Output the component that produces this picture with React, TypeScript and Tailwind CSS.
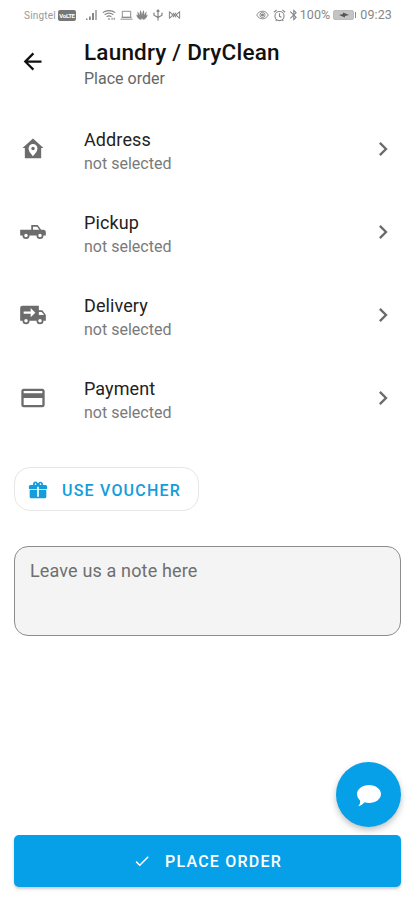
import React from 'react';

type IconProps = {
  path: string;
  className?: string;
};

const Icon: React.FC<IconProps> = ({ path, className }) => (
  <svg viewBox="0 0 24 24" fill="currentColor" fillRule="evenodd" className={className}>
    <path d={path} />
  </svg>
);

const icons = {
  back: 'M20,11V13H8L13.5,18.5L12.08,19.92L4.16,12L12.08,4.08L13.5,5.5L8,11H20Z',
  chevron: 'M8.59,16.58L13.17,12L8.59,7.41L10,6L16,12L10,18L8.59,16.58Z',
  home: 'M12,3L3,11.2H5V20H19V11.2H21L12,3M12,7.7C14.1,7.7 15.8,9.4 15.8,11.5C15.8,14.5 12,18 12,18C12,18 8.2,14.5 8.2,11.5C8.2,9.4 9.9,7.7 12,7.7M12,10A1.5,1.5 0 0,0 10.5,11.5A1.5,1.5 0 0,0 12,13A1.5,1.5 0 0,0 13.5,11.5A1.5,1.5 0 0,0 12,10Z',
  pickup: 'M16,6H10.5V10H1V15H3A3,3 0 0,0 6,18A3,3 0 0,0 9,15H15A3,3 0 0,0 18,18A3,3 0 0,0 21,15H23V12C23,10.89 22.11,10 21,10H19L16,6M12,7.5H15.5L17.46,10H12V7.5M6,13.5A1.5,1.5 0 0,1 7.5,15A1.5,1.5 0 0,1 6,16.5A1.5,1.5 0 0,1 4.5,15A1.5,1.5 0 0,1 6,13.5M18,13.5A1.5,1.5 0 0,1 19.5,15A1.5,1.5 0 0,1 18,16.5A1.5,1.5 0 0,1 16.5,15A1.5,1.5 0 0,1 18,13.5Z',
  truck: 'M3,4A2,2 0 0,0 1,6V17H3A3,3 0 0,0 6,20A3,3 0 0,0 9,17H15A3,3 0 0,0 18,20A3,3 0 0,0 21,17H23V12L20,8H17V4H3M10,6L14,10L10,14V11H4V9H10V6M17,9.5H19.5L21.47,12H17V9.5M6,15.5A1.5,1.5 0 0,1 7.5,17A1.5,1.5 0 0,1 6,18.5A1.5,1.5 0 0,1 4.5,17A1.5,1.5 0 0,1 6,15.5M18,15.5A1.5,1.5 0 0,1 19.5,17A1.5,1.5 0 0,1 18,18.5A1.5,1.5 0 0,1 16.5,17A1.5,1.5 0 0,1 18,15.5Z',
  card: 'M20,8H4V6H20V8M20,18H4V12H20V18M20,4H4C2.89,4 2,4.89 2,6V18A2,2 0 0,0 4,20H20A2,2 0 0,0 22,18V6C22,4.89 21.1,4 20,4Z',
  gift: 'M9.06,1.93C7.17,1.92 5.33,3.74 6.17,6H3A2,2 0 0,0 1,8V10A1,1 0 0,0 2,11H11V8H13V11H22A1,1 0 0,0 23,10V8A2,2 0 0,0 21,6H17.83C19,2.73 14.6,0.42 12.57,3.24L12,4L11.43,3.22C10.8,2.33 9.93,1.94 9.06,1.93M9,4C9.89,4 10.34,5.08 9.71,5.71C9.08,6.34 8,5.89 8,5A1,1 0 0,1 9,4M15,4C15.89,4 16.34,5.08 15.71,5.71C15.08,6.34 14,5.89 14,5A1,1 0 0,1 15,4M2,12V20A2,2 0 0,0 4,22H20A2,2 0 0,0 22,20V12H13V20H11V12H2Z',
  check: 'M21,7L9,19L3.5,13.5L4.91,12.09L9,16.17L19.59,5.59L21,7Z',
  chat: 'M12,2C18.6,2 24,6 24,11C24,16 18.6,20 12,20C10.4,20 8.9,19.8 7.5,19.3C5.6,21.600 3.400,23 1.200,23.200C2.800,21.600 3.400,19.600 3.100,17.500C1.200,15.800 0,13.500 0,11C0,6 5.400,2 12,2Z',
  bluetooth: 'M14.88,16.29L13,18.17V14.41M13,5.83L14.88,7.71L13,9.58M17.71,7.71L12,2H11V9.58L6.41,5L5,6.41L10.59,12L5,17.58L6.41,19L11,14.41V22H12L17.71,16.29L13.41,12L17.71,7.71Z',
};

const rows = [
  { label: 'Address', icon: icons.home },
  { label: 'Pickup', icon: icons.pickup },
  { label: 'Delivery', icon: icons.truck },
  { label: 'Payment', icon: icons.card },
];

const StatusBar: React.FC = () => (
  <div className="flex h-[30px] items-center justify-between pr-[23px] pl-6 text-[#868686]">
    <div className="flex items-center">
      <span className="w-[33px] text-[10px] tracking-[0.2px] text-[#999]">Singtel</span>
      <span className="mr-2.5 ml-px flex h-[11px] w-[18px] items-center justify-center rounded-xs bg-[#777] text-[6px] font-bold tracking-tighter text-white">VoLTE</span>
      <svg viewBox="0 0 12 12" className="mr-1 size-3" fill="currentColor">
        <path d="M0 11V9.5h1.5V11zM3 11V7.5h1.8V11zM6 11V4h2v7z" />
        <path d="M9 11V1h2v10z" opacity=".65" />
      </svg>
      <svg viewBox="0 0 16 12" className="mr-1 h-3 w-[14px]" fill="none" stroke="currentColor" strokeWidth="1.3">
        <path d="M.8 3.3C5 .2 11 .2 15.2 3.3M3 5.7c3-2.2 7-2.2 10 0M5.3 8c1.7-1.2 3.7-1.2 5.4 0M7 10.2l1 .8 1-.8M11.5 9v2.5M14 9v2.5" />
      </svg>
      <svg viewBox="0 0 14 12" className="mr-[3px] h-3 w-[13px]" fill="none" stroke="currentColor">
        <path d="M2.5 2h9v6.5h-9zM.5 10.5h13M1.5 8.5h11" />
      </svg>
      <svg viewBox="0 0 12 12" className="mr-1 size-3" fill="currentColor">
        <path d="M5.8 10.8C4 8 3.2 4 4.2 1c1.700 2 2.200 6 1.600 9.800M6.200 10.800C8 8 8.800 4 7.800 1c-1.700 2-2.200 6-1.600 9.800M5.300 10.800C2.600 9 1.200 5.800 1.500 2.500 3.500 4.500 5 7.500 5.300 10.800M6.700 10.800c2.700-1.800 4.100-5 3.800-8.300-2 2-3.500 5-3.800 8.300M4.800 10.900C2.500 10.200.8 8.500.2 5.500c2 .8 3.800 2.600 4.600 5.400M7.200 10.900c2.300-.7 4-2.400 4.600-5.400-2 .8-3.800 2.600-4.600 5.400" />
      </svg>
      <svg viewBox="0 0 12 12" className="mr-1 size-3" fill="none" stroke="currentColor" strokeWidth="1.2">
        <path d="M6 11.500V1M4.600 2.700 6 1l1.400 1.700M2 4v2.200L6 8.500l4-2.300V4M1.300 4.300h1.400M9.300 4.300h1.400" />
      </svg>
      <svg viewBox="0 0 14 12" className="h-3 w-[13px]" fill="none" stroke="currentColor" strokeWidth="1.1">
        <path d="M1.5 2v8M12.5 2v8M2 3l3.5 3L2 9M12 3 8.500 6 12 9M5.500 3.500 8.500 8.500M8.500 3.500 5.500 8.500" />
      </svg>
    </div>
    <div className="flex items-center">
      <svg viewBox="0 0 14 12" className="mr-1 h-3 w-[13px]" fill="none" stroke="currentColor">
        <path d="M.8 6C3.5.5 10.5.5 13.2 6 10.5 11.5 3.5 11.500.8 6Z" />
        <circle cx="7" cy="6" r="2.8" />
        <circle cx="7" cy="6" r="1.2" fill="currentColor" />
      </svg>
      <svg viewBox="0 0 12 12" className="mr-[3px] h-[13px] w-[13px]" fill="none" stroke="currentColor">
        <circle cx="6" cy="6.5" r="4.2" />
        <path d="M6 4v2.800l1.800.8M.8 3 3.300.9M11.200 3 8.700.9M2.500 11l1-1M9.500 11l-1-1" />
      </svg>
      <svg viewBox="4 1 15 22" fill="currentColor" fillRule="evenodd" className="mr-[2px] h-3 w-[9px]">
        <path d={icons.bluetooth} />
      </svg>
      <span className="text-[12.5px] tracking-[0.1px]">100%</span>
      <span className="ml-[3px] flex h-2.5 w-[21px] items-center justify-center rounded-xs border border-[#bbb] bg-[#c4c4c4]">
        <svg viewBox="0 0 10 6" className="h-1.5 w-2.5" fill="#555">
          <path d="M0 3 4 2V.5L10 3 6 4v1.5z" />
        </svg>
      </span>
      <span className="mr-1 ml-px h-1.5 w-px bg-[#888]" />
      <span className="text-[12.5px] tracking-[0.1px]">09:23</span>
    </div>
  </div>
);

const App: React.FC = () => {
  return (
    <div className="flex h-[900px] w-[415px] flex-col bg-white font-['Roboto',sans-serif]">
      <StatusBar />

      <header className="flex h-[77px] items-start pl-[19px]">
        <Icon path={icons.back} className="mt-[18px] size-[27px] text-[#111]" />
        <div className="ml-[38px] pt-2">
          <h1 className="text-[22.5px] leading-7 font-medium tracking-[0.2px] text-[#111]">Laundry / DryClean</h1>
          <p className="pt-px text-base leading-6 text-[#666]">Place order</p>
        </div>
      </header>

      <ul>
        {rows.map((row) => (
          <li key={row.label} className="flex h-[83px] items-center pr-[18px] pl-[19px]">
            <Icon path={row.icon} className="size-7 text-[#6c6c6c]" />
            <div className="ml-[37px] flex-1 pt-[5px]">
              <p className="text-lg leading-6 tracking-[0.1px] text-[#222]">{row.label}</p>
              <p className="text-base leading-[23px] text-[#7a7a7a]">not selected</p>
            </div>
            <Icon path={icons.chevron} className="size-7 text-[#6c6c6c]" />
          </li>
        ))}
      </ul>

      <button className="mt-7 ml-3.5 flex h-11 w-[185px] items-center rounded-2xl border border-[#e6e6e6] pt-0.5 pl-[13px] text-[#149cdb]">
        <Icon path={icons.gift} className="size-5" />
        <span className="ml-3.5 pt-px text-base font-medium tracking-[1.2px]">USE VOUCHER</span>
      </button>

      <textarea
        className="mx-3.5 mt-[35px] block h-[90px] resize-none rounded-[14px] border border-[#8c8c8c] bg-[#f4f4f4] px-[15px] py-3 text-lg leading-6 tracking-[0.15px] placeholder:text-[#6f6f6f]"
        placeholder="Leave us a note here"
      />

      <div className="mt-auto flex flex-col px-3.5 pb-[13px]">
        <button className="mb-2 flex size-[65px] items-center justify-center self-end rounded-full bg-[#06a0e9] text-white shadow-[0_3px_6px_rgba(0,0,0,0.25)]">
          <Icon path={icons.chat} className="size-6" />
        </button>
        <button className="flex h-[52px] items-center justify-center rounded-[5px] bg-[#06a0e9] text-white shadow-[0_2px_3px_rgba(0,0,0,0.2)]">
          <Icon path={icons.check} className="size-[18px]" />
          <span className="ml-3.5 pt-0.5 text-base font-medium tracking-[1.2px]">PLACE ORDER</span>
        </button>
      </div>
    </div>
  );
};

export default App;
